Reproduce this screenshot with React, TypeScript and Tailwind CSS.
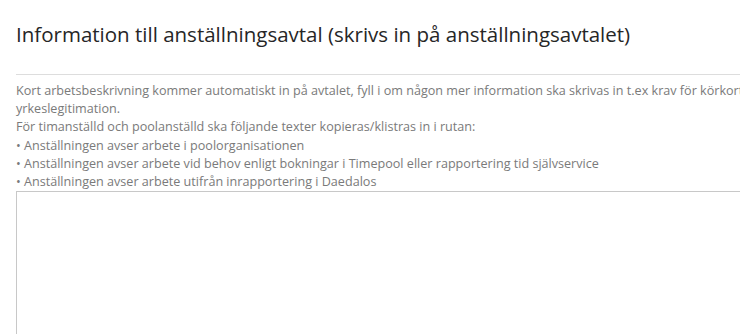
export default function App() {
  return (
    <div className="h-[334px] w-[740px] overflow-hidden bg-white font-['Open_Sans',sans-serif]">
      <div className="w-[816px] px-4 pt-[20px]">
        <h2 className="text-[20.5px] font-normal leading-[28px] text-[#262626]">
          Information till anställningsavtal (skrivs in på anställningsavtalet)
        </h2>
        <hr className="mt-[26px] border-t border-[#dddddd]" />
        <div className="mt-[7px] text-[12.6px] leading-[18.2px] text-[#7a7a7a]">
          <p>
            Kort arbetsbeskrivning kommer automatiskt in på avtalet, fyll i om någon mer information ska skrivas in t.ex krav för körkort eller
            yrkeslegitimation.
          </p>
          <p>För timanställd och poolanställd ska följande texter kopieras/klistras in i rutan:</p>
          <p>• Anställningen avser arbete i poolorganisationen</p>
          <p>• Anställningen avser arbete vid behov enligt bokningar i Timepool eller rapportering tid självservice</p>
          <p>• Anställningen avser arbete utifrån inrapportering i Daedalos</p>
        </div>
        <textarea className="block h-[200px] w-full resize-none border border-[#c8c8c8] outline-none" />
      </div>
    </div>
  );
}
